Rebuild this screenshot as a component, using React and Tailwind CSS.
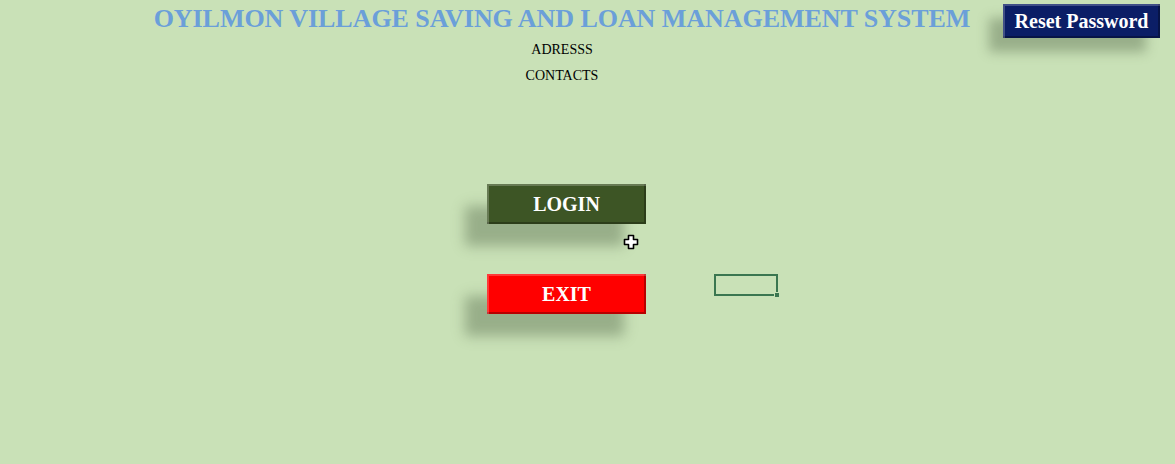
import React from 'react';

const serif = { fontFamily: '"Liberation Serif", "Times New Roman", serif' };

const bevel =
  'shadow-[inset_2px_2px_0_rgba(255,255,255,0.22),inset_-2px_-2px_0_rgba(0,0,0,0.28),-22px_22px_12px_rgba(80,100,70,0.4)]';

const SheetButton = ({ label, className }) => (
  <button
    className={`w-[159px] h-[40px] flex items-center justify-center text-white font-bold text-[20px] ${bevel} ${className}`}
    style={serif}
  >
    {label}
  </button>
);

const PlusCursor = () => (
  <svg width="16" height="16" viewBox="0 0 16 16" className="absolute left-[623px] top-[234px]">
    <path
      d="M5.5 1.5h5v4h4v5h-4v4h-5v-4h-4v-5h4z"
      fill="#fff"
      stroke="#000"
      strokeWidth="1.6"
      strokeLinejoin="round"
    />
  </svg>
);

export default function App() {
  return (
    <div className="relative w-[1175px] h-[464px] bg-[#c9e1b7] overflow-hidden" style={serif}>
      <div className="flex items-start pt-[4px]">
        <div className="w-[1003px] flex flex-col items-center pl-[121px]">
          <h1 className="text-[#6b9fd9] font-bold text-[26px] leading-[28px] mt-[1px] tracking-[-0.05px]">
            OYILMON VILLAGE SAVING AND LOAN MANAGEMENT SYSTEM
          </h1>
          <p className="text-[14px] text-black mt-[9px] leading-[16px]">ADRESSS</p>
          <p className="text-[14px] text-black mt-[10px] leading-[16px]">CONTACTS</p>
        </div>
        <button
          className="w-[157px] h-[34px] bg-[#0b1e66] text-white font-bold text-[20px] shadow-[inset_2px_2px_0_rgba(255,255,255,0.22),inset_-2px_-2px_0_rgba(0,0,0,0.3),-14px_14px_12px_rgba(80,100,70,0.4)]"
          style={serif}
        >
          Reset Password
        </button>
      </div>

      <div className="flex items-start pl-[487px] mt-[100px]">
        <div className="flex flex-col gap-[50px]">
          <SheetButton label="LOGIN" className="bg-[#3d5525]" />
          <SheetButton label="EXIT" className="bg-[#ff0000]" />
        </div>
        <div className="relative ml-[68px] mt-[90px] w-[64px] h-[22px] border-2 border-[#3a7650]">
          <span className="absolute -right-[4px] -bottom-[4px] w-[6px] h-[6px] bg-[#3a7650] border border-[#c9e1b7]" />
        </div>
      </div>

      <PlusCursor />
    </div>
  );
}
